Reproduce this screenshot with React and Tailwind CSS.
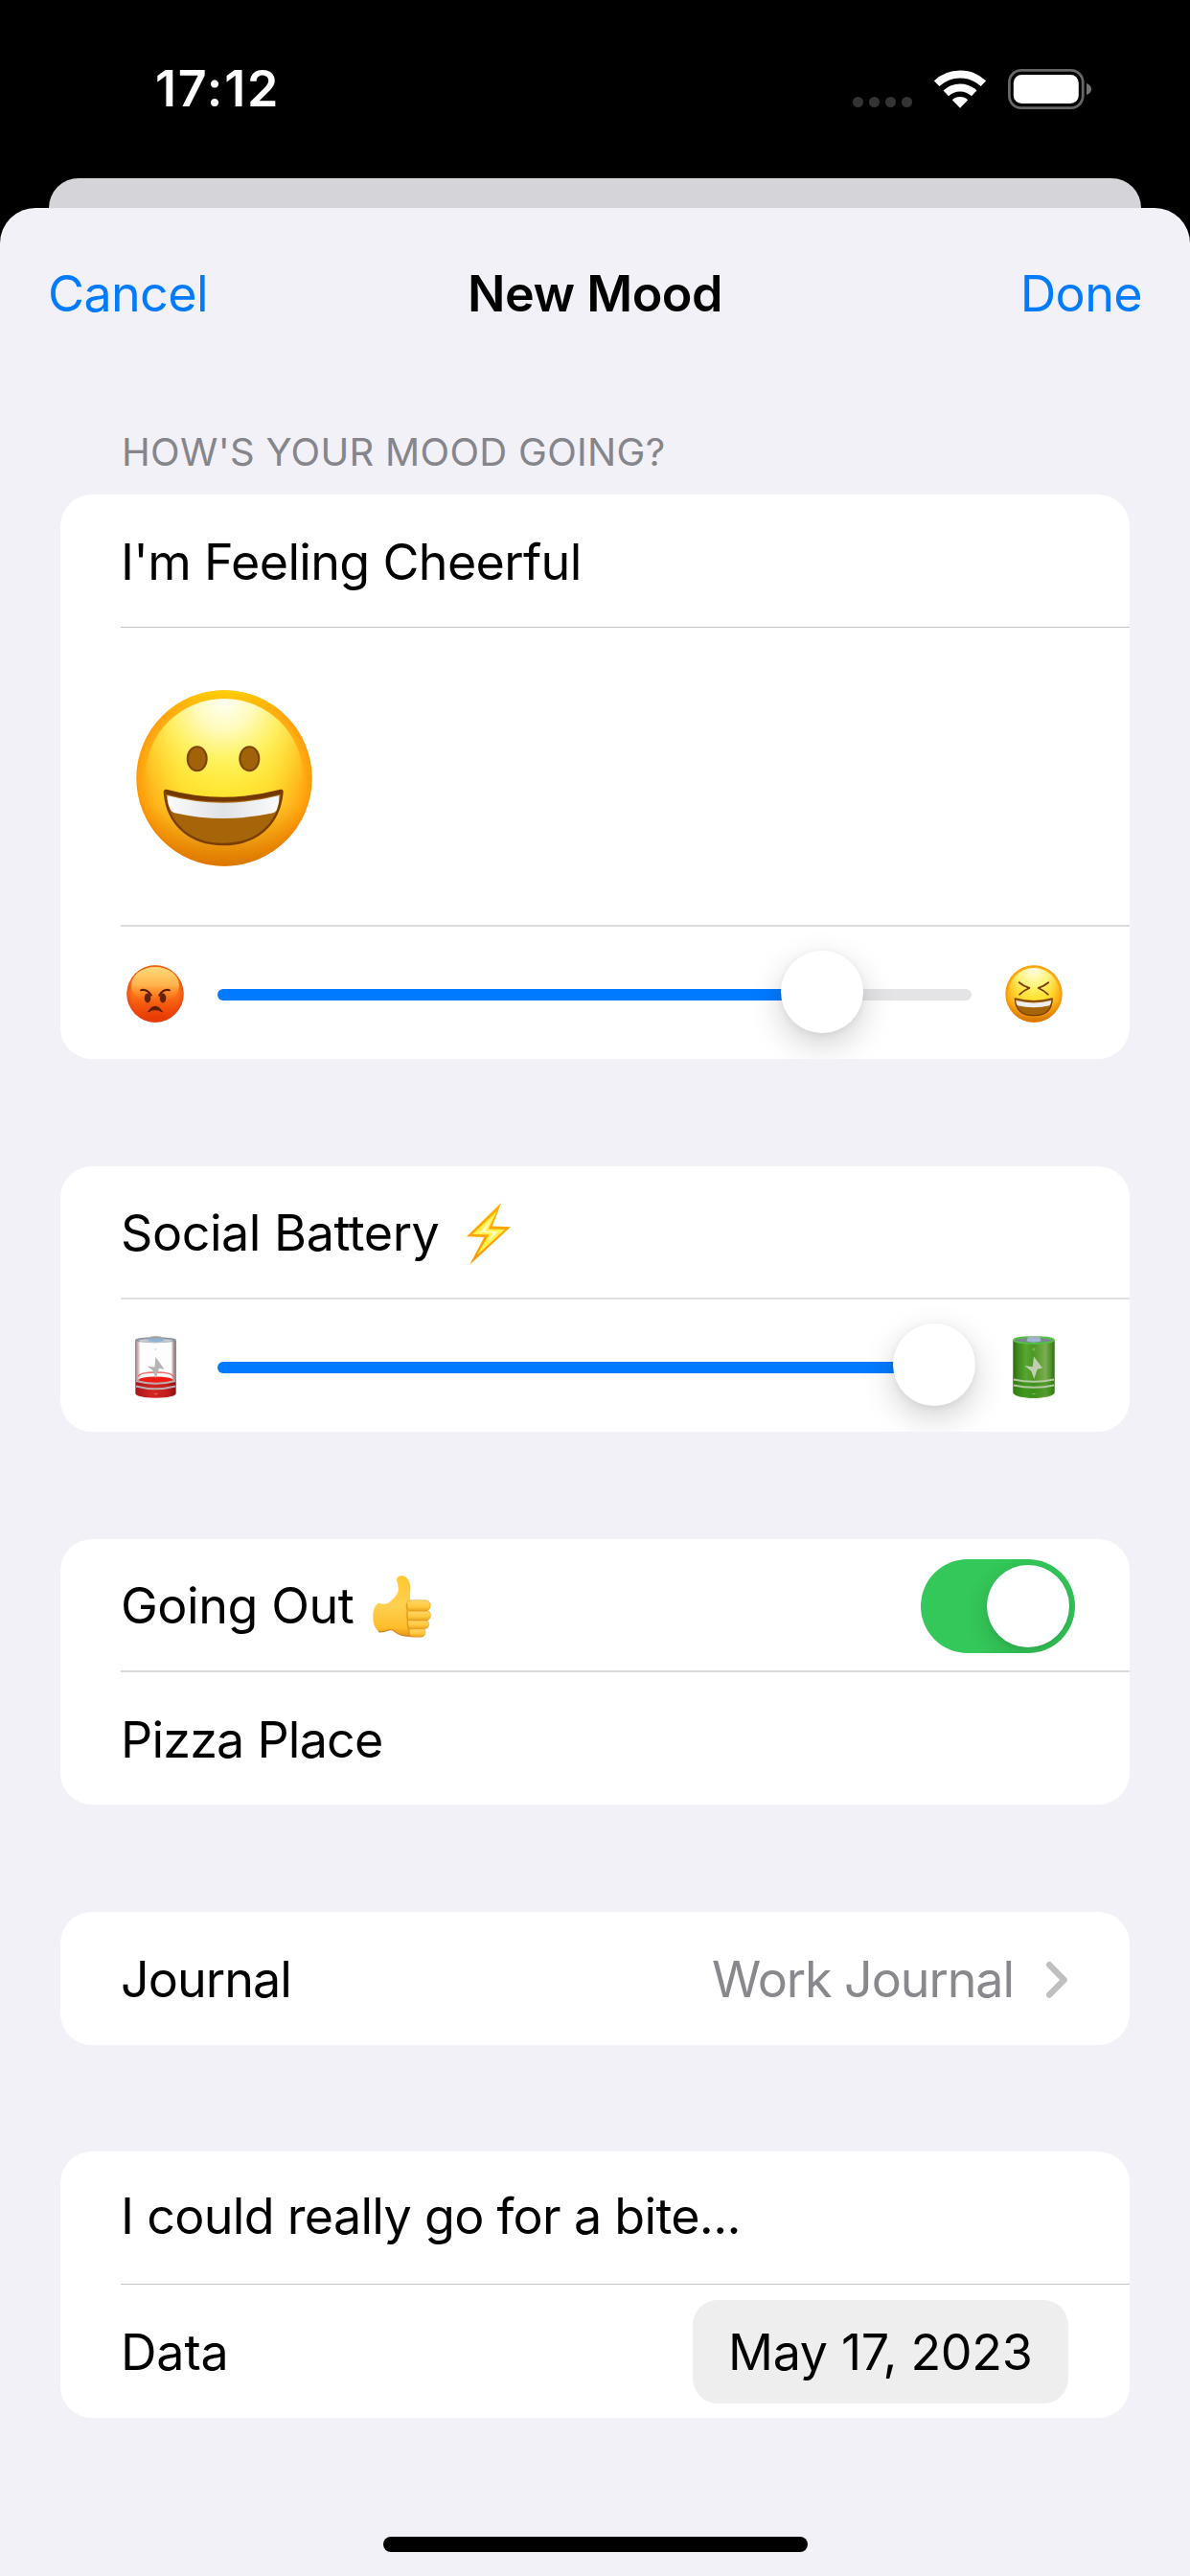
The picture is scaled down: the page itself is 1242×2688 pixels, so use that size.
import React, { useState } from 'react';
import clsx from 'clsx';

// Slider geometry in px
const THUMB_OVERHANG = 4;
const THUMB_TRAVEL = 709;

const WifiIcon = () => (
  <svg width="54" height="40" viewBox="0 0 54 40" fill="none">
    <path d="M2.6 14.2a35.4 35.4 0 0 1 48.8 0" stroke="#fff" strokeWidth="8" />
    <path d="M12.3 24.3a21.4 21.4 0 0 1 29.4 0" stroke="#fff" strokeWidth="8" />
    <path d="M18.8 31.2a12 12 0 0 1 16.4 0L27 39.8z" fill="#fff" />
  </svg>
);

const BatteryIcon = () => (
  <svg width="87" height="42" viewBox="0 0 87 42" fill="none">
    <rect x="1.4" y="1.4" width="76.8" height="39.2" rx="12.5" stroke="#666" strokeWidth="2.8" />
    <rect x="5.8" y="6" width="68" height="30" rx="8.5" fill="#fff" />
    <path d="M82 15c3 .9 5 3.2 5 6s-2 5.1-5 6z" fill="#737373" />
  </svg>
);

const GrinningFace = () => (
  <svg width="184" height="184" viewBox="0 0 184 184">
    <defs>
      <radialGradient id="grin-base" cx=".5" cy=".48" r=".52">
        <stop offset="0" stopColor="#ffe92c" />
        <stop offset=".5" stopColor="#ffd92c" />
        <stop offset=".8" stopColor="#ffb81e" />
        <stop offset=".94" stopColor="#ff9f0a" />
        <stop offset="1" stopColor="#f98a00" />
      </radialGradient>
      <linearGradient id="grin-rim" x1="0" y1="0" x2="0" y2="1">
        <stop offset="0" stopColor="#ffd200" />
        <stop offset=".16" stopColor="#ffb400" stopOpacity="0" />
        <stop offset=".65" stopColor="#e08000" stopOpacity="0" />
        <stop offset="1" stopColor="#d67300" stopOpacity=".85" />
      </linearGradient>
      <radialGradient id="grin-shine" cx=".5" cy=".02" r=".72">
        <stop offset="0" stopColor="#fffff2" />
        <stop offset=".25" stopColor="#fffbbd" />
        <stop offset=".52" stopColor="#fff466" stopOpacity=".9" />
        <stop offset="1" stopColor="#ffe92c" stopOpacity="0" />
      </radialGradient>
      <linearGradient id="grin-teeth" x1="0" y1="0" x2="1" y2="0">
        <stop offset="0" stopColor="#fbfbfc" />
        <stop offset=".5" stopColor="#dfe2e6" />
        <stop offset="1" stopColor="#fbfbfc" />
      </linearGradient>
    </defs>
    <circle cx="92" cy="92" r="91.7" fill="url(#grin-base)" />
    <circle cx="92" cy="92" r="91.7" fill="url(#grin-rim)" />
    <ellipse cx="92" cy="90" rx="82" ry="81" fill="url(#grin-shine)" />
    <ellipse cx="63.7" cy="71.7" rx="10" ry="12.5" fill="#a1620a" stroke="#7d4300" strokeWidth="2" />
    <ellipse cx="118.3" cy="71.7" rx="10" ry="12.5" fill="#a1620a" stroke="#7d4300" strokeWidth="2" />
    <path
      d="M31.5 105Q91 121 151 105Q153 104.500 152.300 108C149 141 125 161 91 161S33 141 30 108Q29.500 104.500 31.500 105Z"
      fill="#a66508"
      stroke="#7a3e00"
      strokeWidth="2.5"
    />
    <path
      d="M32.500 110Q91 125.500 149.500 110Q149.500 118 147 124.500Q146 127.500 142 128.500Q91 139.500 41.500 128.500Q37 127.500 35.800 124.500Q32.500 118 32.500 110Z"
      fill="url(#grin-teeth)"
    />
    <path d="M31.500 106.500Q91 122.500 151 106.500" fill="none" stroke="#733700" strokeWidth="4" />
  </svg>
);

const AngryFace = () => (
  <svg width="60" height="60" viewBox="0 0 60 60">
    <defs>
      <linearGradient id="angry-base" x1="0" y1="0" x2="0" y2="1">
        <stop offset="0" stopColor="#ff8c16" />
        <stop offset=".5" stopColor="#fd7418" />
        <stop offset="1" stopColor="#e62e00" />
      </linearGradient>
      <radialGradient id="angry-edge" cx=".5" cy=".5" r=".5">
        <stop offset=".8" stopColor="#ea4a10" stopOpacity="0" />
        <stop offset="1" stopColor="#e63f10" stopOpacity=".7" />
      </radialGradient>
      <linearGradient id="angry-shine" x1="0" y1="0" x2="0" y2="1">
        <stop offset="0" stopColor="#ffdc7c" />
        <stop offset=".5" stopColor="#ffbd55" stopOpacity=".85" />
        <stop offset="1" stopColor="#fd7418" stopOpacity="0" />
      </linearGradient>
    </defs>
    <circle cx="30" cy="30" r="29.7" fill="url(#angry-base)" />
    <circle cx="30" cy="30" r="29.7" fill="url(#angry-edge)" />
    <ellipse cx="30" cy="21" rx="25" ry="19" fill="url(#angry-shine)" />
    <ellipse cx="22" cy="34.5" rx="3.3" ry="5" fill="#6a2204" />
    <ellipse cx="38" cy="34.5" rx="3.3" ry="5" fill="#6a2204" />
    <path d="M15.2 26.2Q21.5 24.8 25.7 31.5M44.8 26.2Q38.5 24.8 34.3 31.5" fill="none" stroke="#5f1d03" strokeWidth="2.2" strokeLinecap="round" />
    <path d="M22.5 49Q25.5 43.2 30 43.2T37.5 49Q33.5 46.6 30 46.6T22.5 49Z" fill="#5f1d03" stroke="#5f1d03" strokeWidth="1" strokeLinejoin="round" />
  </svg>
);

const LaughingFace = () => (
  <svg width="60" height="60" viewBox="0 0 60 60">
    <defs>
      <radialGradient id="laugh-base" cx=".5" cy=".48" r=".52">
        <stop offset="0" stopColor="#ffe42c" />
        <stop offset=".55" stopColor="#ffd62a" />
        <stop offset=".85" stopColor="#ffb01a" />
        <stop offset="1" stopColor="#ee8a00" />
      </radialGradient>
      <linearGradient id="laugh-rim" x1="0" y1="0" x2="0" y2="1">
        <stop offset=".6" stopColor="#e08000" stopOpacity="0" />
        <stop offset="1" stopColor="#d67300" stopOpacity=".9" />
      </linearGradient>
      <radialGradient id="laugh-shine" cx=".5" cy=".02" r=".7">
        <stop offset="0" stopColor="#ffffec" />
        <stop offset=".5" stopColor="#fff680" stopOpacity=".9" />
        <stop offset="1" stopColor="#ffe42c" stopOpacity="0" />
      </radialGradient>
    </defs>
    <circle cx="30" cy="30" r="29.7" fill="url(#laugh-base)" />
    <circle cx="30" cy="30" r="29.7" fill="url(#laugh-rim)" />
    <circle cx="30" cy="29.5" r="26.5" fill="url(#laugh-shine)" />
    <path d="M14.8 18.2Q19 21.8 25.3 24Q19.5 26.5 15.2 30.6M45.2 18.2Q41 21.8 34.7 24Q40.5 26.5 44.8 30.6" fill="none" stroke="#7a3d00" strokeWidth="1.9" strokeLinecap="round" strokeLinejoin="round" />
    <path d="M10.3 34.9Q30 40.2 49.3 34.9Q49 52.6 30 52.6T10.3 34.9Z" fill="#a66508" stroke="#7a3e00" strokeWidth="1.2" strokeLinejoin="round" />
    <path d="M11.3 37Q30 41.8 48.3 37Q48 40.5 46.5 42.3Q30 46.4 13 42.3Q11.5 40.5 11.3 37Z" fill="#eceef0" />
  </svg>
);

const BoltEmoji = () => (
  <svg width="46" height="65" viewBox="0 0 46 65" className="ml-[29px] shrink-0">
    <defs>
      <linearGradient id="bolt-edge" x1="0" y1="0" x2="0" y2="1">
        <stop offset="0" stopColor="#ffb400" />
        <stop offset="1" stopColor="#ff9500" />
      </linearGradient>
    </defs>
    <path d="M36.2 0L26.8 24.5L46 25.3L3.4 64.6L18.3 36L0 35.3Z" fill="url(#bolt-edge)" />
    <path d="M31.5 9L22.8 27.5L40 27.9L10.5 55L23.5 33.2L6 32.9Z" fill="#fff352" />
    <path d="M26 17L19.5 29.8L33 29.9L22 41L27.5 31.2L14 31Z" fill="#fffcc4" />
  </svg>
);

const ThumbsUpEmoji = () => (
  <svg width="61" height="65" viewBox="0 0 61 65" className="ml-[20px] shrink-0">
    <defs>
      <linearGradient id="hand" x1="0" y1="0" x2="0" y2="1">
        <stop offset="0" stopColor="#ffc730" />
        <stop offset=".5" stopColor="#ffd051" />
        <stop offset=".85" stopColor="#fdbd2b" />
        <stop offset="1" stopColor="#e69a12" />
      </linearGradient>
      <linearGradient id="finger" x1="0" y1="0" x2="0" y2="1">
        <stop offset="0" stopColor="#ffd767" />
        <stop offset=".6" stopColor="#ffc93f" />
        <stop offset="1" stopColor="#eaa01a" />
      </linearGradient>
    </defs>
    <path
      d="M25.2 5.5C24.5 1.5 28 0 31 .3C35.5 .8 38 5 39.2 10C40 15 38.2 20 39.2 26L46 44L42 63.5C35 63.8 28 62.5 22.5 58.5C20 56.5 19.5 56.2 17 57C13 58.5 9.5 59.3 6.5 58.8C2 55 0 49 .3 42C.5 35.5 2.500 31 5.800 28.700C9 29.500 12 30 15.300 29.300C21 25.500 25.500 20.500 26.700 16C27.200 12 25.900 9 25.200 5.500Z"
      fill="url(#hand)"
    />
    <path d="M6 58.500C9.500 59.300 13 58.300 17 56.800C20 55.900 21 57 23 58.500C28 62.500 35 63.800 42 63.500" fill="none" stroke="#c9740c" strokeOpacity=".75" strokeWidth="1.3" />
    <rect x="38" y="54.5" width="16.8" height="9.7" rx="4.5" fill="url(#finger)" stroke="#d98a10" strokeOpacity=".6" strokeWidth=".8" />
    <rect x="36" y="46" width="22.6" height="9.8" rx="4.7" fill="url(#finger)" stroke="#d98a10" strokeOpacity=".6" strokeWidth=".8" />
    <rect x="35.2" y="36.3" width="25.2" height="10.8" rx="5" fill="url(#finger)" stroke="#d98a10" strokeOpacity=".6" strokeWidth=".8" />
    <rect x="35" y="25.7" width="25.3" height="11.5" rx="5.5" fill="url(#finger)" stroke="#d98a10" strokeOpacity=".5" strokeWidth=".8" />
    <path d="M35.5 29C36.5 36 35.5 46 37 54C37.5 58 37.5 60 39 63" fill="none" stroke="#e09a1c" strokeWidth="1.2" />
  </svg>
);

const LowBatteryEmoji = () => (
  <svg width="43" height="65" viewBox="0 0 43 65">
    <defs>
      <linearGradient id="low-glass" x1="0" y1="0" x2="1" y2="0">
        <stop offset="0" stopColor="#8d8488" />
        <stop offset=".06" stopColor="#c9a9a9" />
        <stop offset=".12" stopColor="#f6f2f3" />
        <stop offset=".88" stopColor="#f6f2f3" />
        <stop offset=".94" stopColor="#a98a8c" />
        <stop offset="1" stopColor="#8d8488" />
      </linearGradient>
      <linearGradient id="low-charge" x1="0" y1="0" x2="1" y2="0">
        <stop offset="0" stopColor="#a81418" />
        <stop offset=".4" stopColor="#d32623" />
        <stop offset=".8" stopColor="#c41c1c" />
        <stop offset="1" stopColor="#8f1013" />
      </linearGradient>
    </defs>
    <path d="M0 4.5H43V60C43 63 34 65 21.5 65S0 63 0 60Z" fill="url(#low-glass)" />
    <path d="M5.5 7H37.5V42H5.5Z" fill="#fdfdfd" />
    <path d="M.8 46Q21.5 52 42.2 46V60C42.2 62.6 34 64.7 21.5 64.7S.8 62.6 .8 60Z" fill="url(#low-charge)" />
    <ellipse cx="21.5" cy="46" rx="18" ry="3.6" fill="#ee1c14" />
    <path d="M3 42.5Q5 38 21.5 38T40 42.5" fill="none" stroke="#ee6a66" strokeWidth="1.3" />
    <path d="M1 47Q21.5 52.5 42 47M1 52.5Q21.5 58 42 52.5" fill="none" stroke="#b9aeb0" strokeWidth="2" />
    <ellipse cx="21.5" cy="4.2" rx="21.3" ry="3" fill="#8e949c" />
    <ellipse cx="21.5" cy="4.8" rx="18" ry="1.9" fill="#c5cbd3" />
    <path d="M14.5 2Q21.5-1.2 28.5 2L30 5Q21.5 7.5 13.5 5Z" fill="#8fb0d6" />
    <ellipse cx="21.5" cy="1.5" rx="6.5" ry="1.3" fill="#a9a39b" />
    <path d="M21.4 22L30.5 34.8L25 33.8L21.8 44L18.5 36L12.6 31.7L20.5 32.5Z" fill="#b5b5b5" />
    <circle cx="21.4" cy="14" r="1" fill="#dcdcdc" />
    <path d="M20 60.5H23.5" stroke="#e0605c" strokeWidth="1.3" />
  </svg>
);

const FullBatteryEmoji = () => (
  <svg width="44" height="65" viewBox="0 0 44 65">
    <defs>
      <linearGradient id="full-body" x1="0" y1="0" x2="1" y2="0">
        <stop offset="0" stopColor="#2c6a14" />
        <stop offset=".12" stopColor="#3f8a1d" />
        <stop offset=".3" stopColor="#58a52f" />
        <stop offset=".5" stopColor="#4c9826" />
        <stop offset=".78" stopColor="#7bad4e" />
        <stop offset=".92" stopColor="#4c8c28" />
        <stop offset="1" stopColor="#2c6a14" />
      </linearGradient>
    </defs>
    <path d="M.3 4.5H43.7V59C43 62.8 34 65 22 65S1 62.8 .3 59Z" fill="url(#full-body)" />
    <path d="M1 46V58.5C2 62 12 64 22 64S42 62 43 58.5V46Q22 52 1 46Z" fill="#2f8a10" fillOpacity=".5" />
    <ellipse cx="22" cy="4.5" rx="21" ry="3.3" fill="#7c868c" stroke="#52c443" strokeWidth="1.7" />
    <path d="M15.5 2Q22-1.2 28.5 2L29.5 5.5Q22 7.8 14.5 5.5Z" fill="#9db6d4" />
    <ellipse cx="22" cy="1.5" rx="6" ry="1.3" fill="#a9b0b8" />
    <path d="M1 45.5Q22 50 43 45.5M1 51.5Q22 56 43 51.5" fill="none" stroke="#b4c9a0" strokeWidth="1.9" />
    <path d="M22 21.5L31 33.5L25.7 34.8L22.3 45L19.3 36.8L12.3 31L20.7 32.2Z" fill="#c0cfb0" />
    <path d="M20.3 14H23.7M22 12.3V15.7M20.3 60.5H23.7" stroke="#85b765" strokeWidth="1.1" />
  </svg>
);

const Card = ({ className, children }) => (
  <section className={clsx('mx-[63px] flex flex-col overflow-hidden rounded-[33px] bg-white', className)}>
    {children}
  </section>
);

// Every row starts at the text inset, so its bottom border does too
const Row = ({ className, children }) => (
  <div className={clsx('ml-[63px] flex shrink-0 items-center', className)}>{children}</div>
);

const Slider = ({ value, min, max }) => {
  const left = value * THUMB_TRAVEL - THUMB_OVERHANG;
  return (
    <>
      <div className="flex w-[72px] shrink-0 justify-center">{min}</div>
      <div className="relative mx-[29px] mt-0.5 h-3 w-[787px] shrink-0 rounded-full bg-[#e4e4e6]">
        <div className="h-3 rounded-full bg-[#007aff]" style={{ width: left + 43 }} />
        <div
          className="absolute top-[-40px] size-[86px] rounded-full bg-white shadow-[0_12px_34px_rgba(0,0,0,0.18),0_2px_8px_rgba(0,0,0,0.06)]"
          style={{ left }}
        />
      </div>
      <div className="flex w-[72px] shrink-0 justify-center">{max}</div>
    </>
  );
};

const Toggle = ({ checked, onChange }) => (
  <button
    type="button"
    role="switch"
    aria-checked={checked}
    onClick={() => onChange(!checked)}
    className={clsx(
      'mr-[57px] ml-auto flex h-[98px] w-[161px] items-center overflow-hidden rounded-full px-1.5',
      checked ? 'justify-end bg-[#34c759]' : 'justify-start bg-[#e9e9ea]'
    )}
  >
    <span className="size-[86px] rounded-full bg-white shadow-[0_8px_24px_rgba(0,0,0,0.15),0_2px_4px_rgba(0,0,0,0.05)]" />
  </button>
);

const App = () => {
  const [goingOut, setGoingOut] = useState(true);

  return (
    <div className="flex h-[2688px] w-[1242px] flex-col overflow-hidden bg-black font-['Inter','Liberation_Sans',sans-serif] text-[52px] leading-[64px] text-black">
      {/* Status bar */}
      <header className="flex h-[186px] shrink-0 items-center pr-[103px] pl-[162px] text-white">
        <span className="font-semibold tracking-[1.8px]">17:12</span>
        <div className="mt-[27px] ml-auto flex gap-1.5">
          <i className="size-[11px] rounded-full bg-[#343434]" />
          <i className="size-[11px] rounded-full bg-[#343434]" />
          <i className="size-[11px] rounded-full bg-[#343434]" />
          <i className="size-[11px] rounded-full bg-[#343434]" />
        </div>
        <div className="mr-[23px] ml-[23px]">
          <WifiIcon />
        </div>
        <BatteryIcon />
      </header>

      {/* Edge of the screen behind the sheet */}
      <div className="mx-[51px] h-[31px] shrink-0 rounded-t-[31px] bg-[#d5d4d9]" />

      <main className="flex grow flex-col rounded-t-[37px] bg-[#f2f1f7]">
        <nav className="grid h-[180px] shrink-0 grid-cols-3 items-center px-[50px]">
          <button type="button" className="text-left tracking-[-0.6px] text-[#007aff]">Cancel</button>
          <h1 className="text-center font-semibold tracking-[-0.5px] whitespace-nowrap">New Mood</h1>
          <button type="button" className="text-right tracking-[-0.6px] text-[#007aff]">Done</button>
        </nav>

        <h2 className="mt-[51px] mb-5 ml-[127px] shrink-0 text-[40px] leading-[48px] tracking-[0.3px] text-[#85858b]">
          HOW'S YOUR MOOD GOING?
        </h2>

        <Card>
          <Row className="h-[139px] border-b border-[#c4c4c6] pt-[3px] tracking-[-0.66px]">I'm Feeling Cheerful</Row>
          <Row className="h-[312px] border-b-2 border-[#dcdcde] pt-[3px] pl-4">
            <GrinningFace />
          </Row>
          <Row className="h-[138px] pt-0.5">
            <Slider value={0.8345} min={<AngryFace />} max={<LaughingFace />} />
          </Row>
        </Card>

        <Card className="mt-28">
          <Row className="h-[139px] border-b-2 border-[#dfdfe0] pt-[3px]">
            <span className="tracking-[-0.45px]">Social Battery</span>
            <BoltEmoji />
          </Row>
          <Row className="h-[138px] pt-0.5">
            <Slider value={1} min={<LowBatteryEmoji />} max={<FullBatteryEmoji />} />
          </Row>
        </Card>

        <Card className="mt-28">
          <Row className="h-[139px] border-b-2 border-[#dadadc] pt-[3px]">
            <span className="tracking-[-0.44px]">Going Out</span>
            <ThumbsUpEmoji />
            <Toggle checked={goingOut} onChange={setGoingOut} />
          </Row>
          <Row className="h-[138px] pt-[3px] tracking-[-0.78px]">Pizza Place</Row>
        </Card>

        <Card className="mt-28">
          <Row className="h-[139px] justify-between pt-0.5 pr-[64px]">
            <span className="tracking-[-0.95px]">Journal</span>
            <div className="flex items-center gap-[33px] text-[#88888d]">
              <span className="tracking-[-1.08px]">Work Journal</span>
              <svg width="24" height="40" viewBox="0 0 24 40" fill="none">
                <path d="M4.2 4.2L19.6 20L4.2 35.6" stroke="#bfbfc0" strokeWidth="6.4" strokeLinecap="round" strokeLinejoin="round" />
              </svg>
            </div>
          </Row>
        </Card>

        <Card className="mt-[111px]">
          <Row className="h-[139px] border-b border-[#c4c4c6] pb-[3px] tracking-[-0.69px]">
            I could really go for a bite...
          </Row>
          <Row className="h-[139px] justify-between pt-[1px] pr-[64px]">
            <span className="pt-[1px] tracking-[-0.16px]">Data</span>
            <button
              type="button"
              className="h-[108px] w-[392px] rounded-[26px] bg-[#eeeeef] pt-0.5 pl-[37px] text-left tracking-[-0.32px] whitespace-nowrap"
            >
              May 17, 2023
            </button>
          </Row>
        </Card>

        {/* Home indicator */}
        <div className="mx-auto mt-[124px] h-4 w-[443px] shrink-0 rounded-full bg-black" />
      </main>
    </div>
  );
};

export default App;
